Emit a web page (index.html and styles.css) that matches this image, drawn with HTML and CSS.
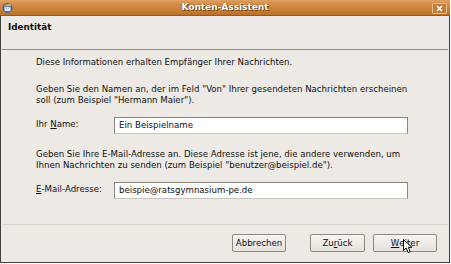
FILE: index.html
```html
<!DOCTYPE html>
<html lang="de">
<head>
<meta charset="utf-8">
<title>Konten-Assistent</title>
<link rel="stylesheet" href="styles.css">
</head>
<body>
<div class="window">
  <div class="titlebar">
    <svg class="app-icon" width="11" height="12" viewBox="0 0 11 12">
      <circle cx="5.5" cy="6" r="5" fill="#2f63b0"/>
      <path d="M1.5 4.5 Q4 1 8.5 2 L9.5 4 Z" fill="#e9a23b"/>
      <rect x="2.5" y="5" width="6" height="4" fill="#f4f4f4" stroke="#9fb2cf" stroke-width="0.6"/>
      <path d="M2.5 5 L5.5 7.3 L8.5 5" fill="none" stroke="#7d93b8" stroke-width="0.6"/>
    </svg>
    <div class="title">Konten-Assistent</div>
    <div class="close">
      <svg width="7" height="7" viewBox="0 0 7 7"><path d="M1 1 L6 6 M6 1 L1 6" stroke="#fff" stroke-width="1.6"/></svg>
    </div>
  </div>
  <div class="header">Identität</div>
  <div class="content">
    <p class="p-intro">Diese Informationen erhalten Empfänger Ihrer Nachrichten.</p>
    <p class="p-name">Geben Sie den Namen an, der im Feld "Von" Ihrer gesendeten Nachrichten erscheinen<br>soll (zum Beispiel "Hermann Maier").</p>
    <div class="field">
      <label class="label">Ihr <u>N</u>ame:</label>
      <div class="input">Ein Beispielname</div>
    </div>
    <p class="p-mail">Geben Sie Ihre E-Mail-Adresse an. Diese Adresse ist jene, die andere verwenden, um<br>Ihnen Nachrichten zu senden (zum Beispiel "benutzer@beispiel.de").</p>
    <div class="field">
      <label class="label"><u>E</u>-Mail-Adresse:</label>
      <div class="input">beispie@ratsgymnasium-pe.de</div>
    </div>
  </div>
  <div class="buttons">
    <div class="btn btn-cancel">Abbrechen</div>
    <div class="btn btn-back">Zu<u>r</u>ück</div>
    <div class="btn btn-next"><u>W</u>eiter</div>
  </div>
  <svg class="cursor" width="11" height="15" viewBox="0 0 11 15">
    <path d="M0.5 0.5 L0.5 11.5 L3.2 9 L5.2 13.6 L7.2 12.7 L5.3 8.3 L8.9 8.3 Z" fill="#fff" stroke="#000" stroke-width="1"/>
  </svg>
</div>
</body>
</html>
```

FILE: styles.css
```css
html, body {
  margin: 0;
  padding: 0;
  background: #ffffff;
}
body {
  width: 451px;
  height: 264px;
  overflow: hidden;
  font-family: "DejaVu Sans", sans-serif;
  font-size: 8.6px;
  color: #101010;
}
.window {
  position: relative;
  width: 448px;
  height: 262px;
  background: #edeae6;
  border: 1px solid #45423e;
  border-top: none;
  display: flex;
  flex-direction: column;
}
.titlebar {
  height: 16px;
  margin: 0 -1px;
  background: linear-gradient(#dea263 0%, #d48b43 30%, #c97d34 70%, #b8702b 100%);
  border-bottom: 1px solid #8d5a28;
  box-sizing: border-box;
  display: flex;
  align-items: center;
  position: relative;
}
.app-icon {
  margin-left: 2px;
  margin-top: 1px;
}
.title {
  position: absolute;
  left: 0;
  right: 0;
  text-align: center;
  font-weight: bold;
  font-size: 9px;
  color: #ffffff;
  text-shadow: 0 0 1px #5a3510, 1px 1px 0 #7a4a1c;
  top: 2px;
}
.close {
  position: absolute;
  right: 3px;
  top: 3px;
  width: 13px;
  height: 9px;
  border: 1px solid #e8bb87;
  background: #c57c36;
  border-radius: 1px;
  display: flex;
  align-items: center;
  justify-content: center;
}
.header {
  height: 34px;
  box-sizing: border-box;
  padding: 6px 0 0 6px;
  font-weight: bold;
  font-size: 8.8px;
  color: #111;
  border-bottom: 1px solid #8f8b84;
  margin: 0 1px;
}
.content {
  padding: 7px 0 0 35px;
  line-height: 11.5px;
}
.content p {
  margin: 0;
}
.p-name {
  margin-top: 15px !important;
}
.p-mail {
  margin-top: 15px !important;
}
.field {
  display: flex;
  align-items: center;
  margin-top: 10px;
}
.label {
  width: 78px;
}
.input {
  width: 294px;
  height: 17px;
  box-sizing: border-box;
  background: #ffffff;
  border: 1px solid #8a867e;
  border-bottom-color: #c9c5be;
  padding: 0 0 0 4px;
  line-height: 15px;
}
.buttons {
  margin-top: auto;
  margin-left: 2px;
  margin-right: 1px;
  border-top: 1px solid #d6d1ca;
  height: 38px;
  box-sizing: border-box;
  display: flex;
  align-items: flex-start;
  justify-content: flex-end;
  padding: 9px 11px 0 0;
}
.btn {
  height: 18px;
  box-sizing: border-box;
  border: 1px solid #8f8a82;
  border-radius: 2px;
  background: linear-gradient(#f7f5f3, #e6e2dc);
  display: flex;
  align-items: center;
  justify-content: center;
}
.btn-cancel { width: 54px; }
.btn-back { width: 55px; margin-left: 24px; }
.btn-next { width: 64px; margin-left: 8px; }
.cursor {
  position: absolute;
  left: 402px;
  top: 239px;
}
```
